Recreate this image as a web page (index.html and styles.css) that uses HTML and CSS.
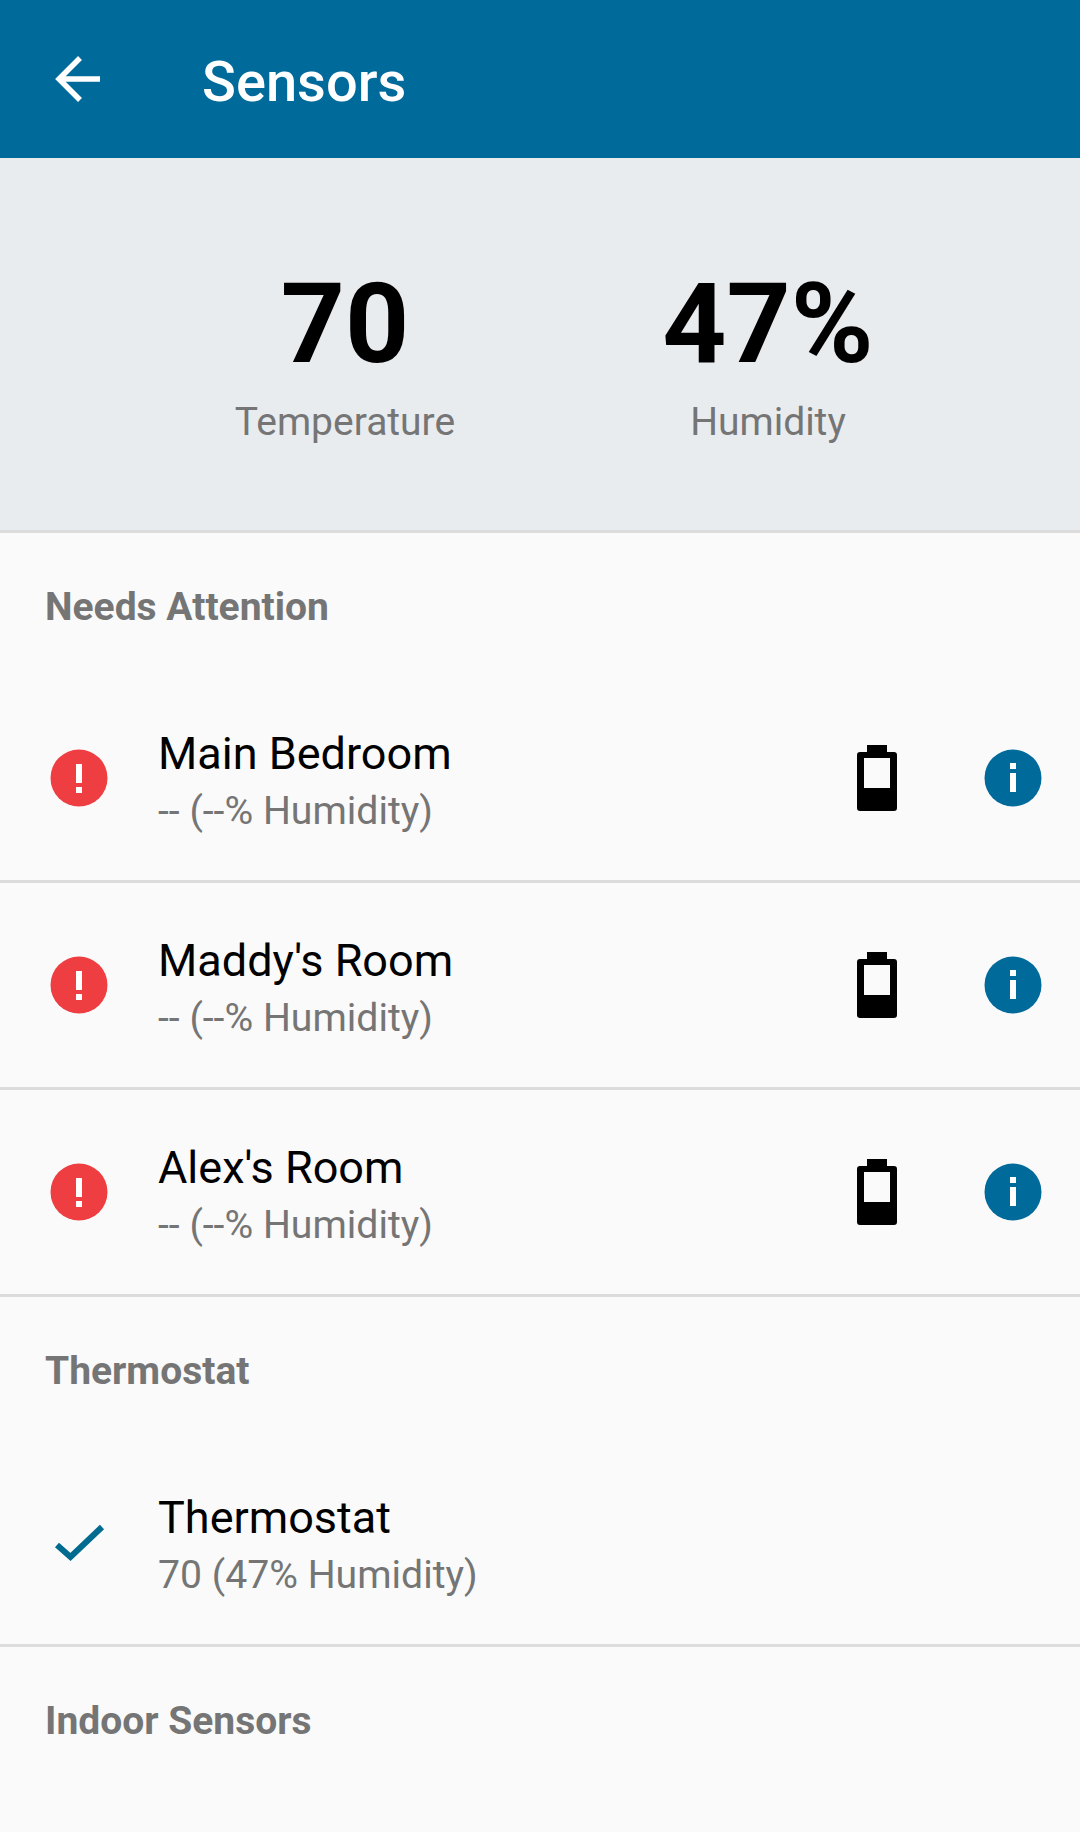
FILE: index.html
```html
<!DOCTYPE html>
<html lang="en">
<head>
<meta charset="utf-8">
<title>Sensors</title>
<link rel="stylesheet" href="styles.css">
</head>
<body>
<header class="appbar">
  <svg class="back" width="48" height="48" viewBox="0 0 48 48"><path d="M46 24H5M26 3 5 24l21 21" fill="none" stroke="#fff" stroke-width="5.500"/></svg>
  <h1 class="title">Sensors</h1>
</header>
<section class="summary">
  <div class="stat"><div class="value">70</div><div class="label">Temperature</div></div>
  <div class="stat"><div class="value">47%</div><div class="label">Humidity</div></div>
</section>
<h2 class="section">Needs Attention</h2>
<div class="row">
  <svg class="status" width="58" height="58" viewBox="0 0 58 58"><circle cx="29" cy="29" r="28.5" fill="#ef3e42"/><path d="M26 15h6v19h-6zM26 38h6v6h-6z" fill="#fff"/></svg>
  <div class="text"><div class="name">Main Bedroom</div><div class="sub">-- (--% Humidity)</div></div>
  <svg class="battery" width="40" height="66" viewBox="0 0 40 66"><path d="M10 0h20v7h7a3 3 0 0 1 3 3v53a3 3 0 0 1-3 3H3a3 3 0 0 1-3-3V10a3 3 0 0 1 3-3h7zM7 13v30h26V13z" fill="#000" fill-rule="evenodd"/></svg>
  <svg class="info" width="58" height="58" viewBox="0 0 58 58"><circle cx="29" cy="29" r="28.5" fill="#006a9b"/><path d="M26 14h6v6h-6zM26 24h6v19h-6z" fill="#fff"/></svg>
</div>
<div class="row">
  <svg class="status" width="58" height="58" viewBox="0 0 58 58"><circle cx="29" cy="29" r="28.5" fill="#ef3e42"/><path d="M26 15h6v19h-6zM26 38h6v6h-6z" fill="#fff"/></svg>
  <div class="text"><div class="name">Maddy's Room</div><div class="sub">-- (--% Humidity)</div></div>
  <svg class="battery" width="40" height="66" viewBox="0 0 40 66"><path d="M10 0h20v7h7a3 3 0 0 1 3 3v53a3 3 0 0 1-3 3H3a3 3 0 0 1-3-3V10a3 3 0 0 1 3-3h7zM7 13v30h26V13z" fill="#000" fill-rule="evenodd"/></svg>
  <svg class="info" width="58" height="58" viewBox="0 0 58 58"><circle cx="29" cy="29" r="28.5" fill="#006a9b"/><path d="M26 14h6v6h-6zM26 24h6v19h-6z" fill="#fff"/></svg>
</div>
<div class="row">
  <svg class="status" width="58" height="58" viewBox="0 0 58 58"><circle cx="29" cy="29" r="28.5" fill="#ef3e42"/><path d="M26 15h6v19h-6zM26 38h6v6h-6z" fill="#fff"/></svg>
  <div class="text"><div class="name">Alex's Room</div><div class="sub">-- (--% Humidity)</div></div>
  <svg class="battery" width="40" height="66" viewBox="0 0 40 66"><path d="M10 0h20v7h7a3 3 0 0 1 3 3v53a3 3 0 0 1-3 3H3a3 3 0 0 1-3-3V10a3 3 0 0 1 3-3h7zM7 13v30h26V13z" fill="#000" fill-rule="evenodd"/></svg>
  <svg class="info" width="58" height="58" viewBox="0 0 58 58"><circle cx="29" cy="29" r="28.5" fill="#006a9b"/><path d="M26 14h6v6h-6zM26 24h6v19h-6z" fill="#fff"/></svg>
</div>
<h2 class="section">Thermostat</h2>
<div class="row">
  <svg class="status" width="58" height="58" viewBox="0 0 58 58"><path d="M7 32 20.500 44 52 14" fill="none" stroke="#006a8f" stroke-width="6"/></svg>
  <div class="text"><div class="name">Thermostat</div><div class="sub">70 (47% Humidity)</div></div>
</div>
<h2 class="section">Indoor Sensors</h2>
</body>
</html>
```

FILE: styles.css
```css
* { box-sizing: border-box; }
html, body { margin: 0; padding: 0; }
body {
  width: 1080px;
  height: 1832px;
  overflow: hidden;
  background: #fafafa;
  font-family: Roboto, "Liberation Sans", sans-serif;
}
.appbar {
  height: 158px;
  background: #006a9b;
  display: flex;
  align-items: center;
  padding-left: 54px;
}
.back { flex: none; }
.title {
  margin: 6px 0 0 100px;
  font-size: 56px;
  font-weight: 500;
  color: #fff;
}
.summary {
  height: 375px;
  background: #e9ecef;
  border-bottom: 3px solid #dcdcdc;
  display: flex;
  gap: 123px;
  padding: 101px 0 0 195px;
}
.stat { width: 300px; text-align: center; }
.value { font-size: 112px; font-weight: 700; color: #000; line-height: 130px; white-space: nowrap; }
.label { margin-top: 11px; font-size: 39px; color: #757575; line-height: 44px; white-space: nowrap; }
.section {
  margin: 0;
  height: 143px;
  padding: 52px 0 0 45px;
  font-size: 39px;
  line-height: 44px;
  font-weight: 700;
  color: #757575;
}
.row {
  height: 207px;
  border-bottom: 3px solid #dcdcdc;
  display: flex;
  align-items: center;
  padding-left: 50px;
}
.status { flex: none; }
.text { flex: 1; margin-left: 50px; padding-top: 9px; }
.name { font-size: 45px; line-height: 56px; color: #000; }
.sub { margin-top: 1px; font-size: 39.2px; line-height: 56px; color: #757575; }
.battery { flex: none; }
.info { flex: none; margin: 0 38px 0 87px; }
```
